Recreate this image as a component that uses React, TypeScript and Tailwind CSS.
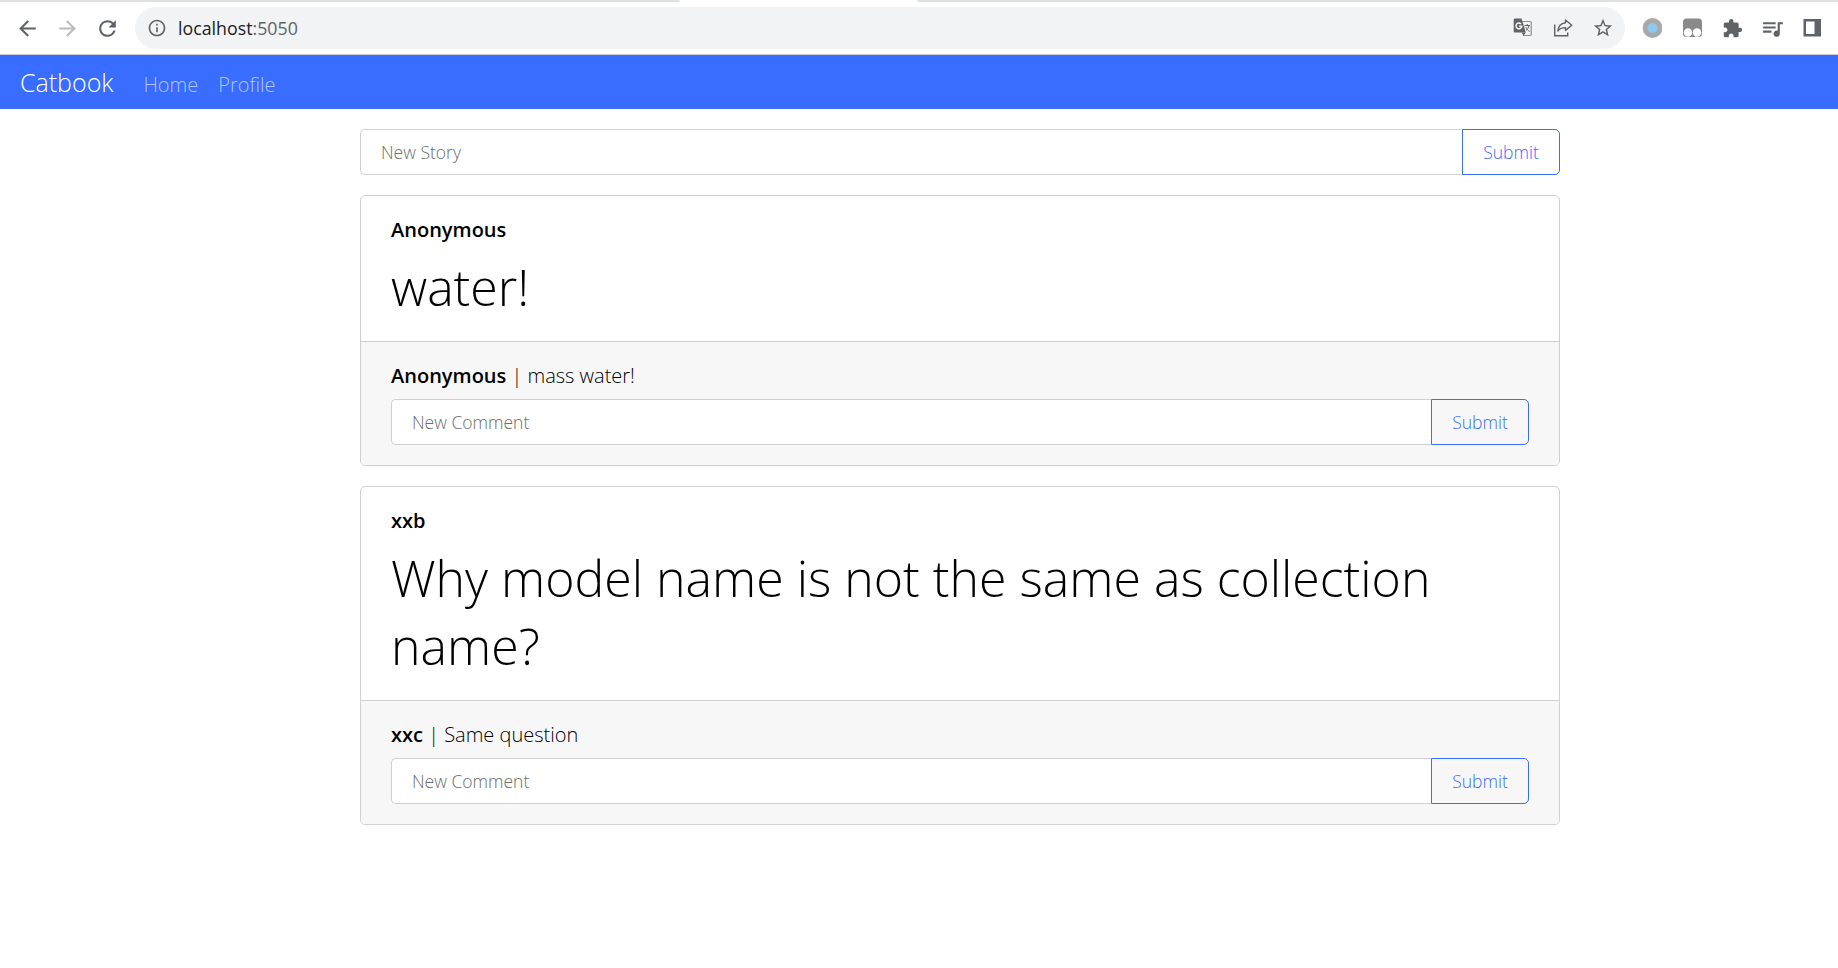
import React from "react";
import { MdArrowBack, MdArrowForward, MdRefresh, MdInfoOutline, MdStarBorder, MdExtension, MdQueueMusic } from "react-icons/md";

function TranslateIcon() {
  return (
    <svg className="size-5" viewBox="0 0 20 20">
      <path d="M9 3.500h8.200a1 1 0 0 1 1 1v12a1 1 0 0 1-1 1H10" fill="none" stroke="#8b8e92" strokeWidth="1.200" />
      <path d="M2 .5h6.500l4.300 14H2a1.300 1.300 0 0 1-1.300-1.300V1.800A1.300 1.300 0 0 1 2 .5z" fill="#5f6368" />
      <path d="M8.500 14.500H12.800L10.500 17.800z" fill="#5f6368" />
      <path d="M8 5.900a2.900 2.900 0 1 0 .8 2.200H6" fill="none" stroke="#fff" strokeWidth="1.400" />
      <path d="M11.500 7.500h5.500M14.300 6v1.500M16 7.500c-.5 2.500-1.800 4-3 5M12.800 9c1 2 2 3.500 4 4.500" fill="none" stroke="#5f6368" strokeWidth="1" />
    </svg>
  );
}

function ShareIcon() {
  return (
    <svg className="size-5" viewBox="0 0 20 20" fill="none" stroke="#5f6368" strokeWidth="1.400">
      <path d="M1.700 6.500V17.800H14.700V14.500" />
      <path d="M12.500 2l6.300 5.200-6.300 5.200V9.600c-3.500 0-6 1-7.700 3.400.4-4 3-7.500 7.700-8.200z" strokeLinejoin="round" />
    </svg>
  );
}

function BrowserBar() {
  return (
    <div className="h-[55px] shrink-0 border-b border-[#c9cbd3] bg-white">
      <div className="flex h-[2px]">
        <div className="w-[680px] rounded-br-[2px] bg-[#dee1e6]" />
        <div className="w-[237px]" />
        <div className="flex-1 rounded-bl-[2px] bg-[#dee1e6]" />
      </div>
      <div className="flex h-[52px] items-center text-[#5f6368]">
        <MdArrowBack className="ml-[15px] size-[25px]" />
        <MdArrowForward className="ml-[15px] size-[25px] text-[#babcbe]" />
        <MdRefresh className="ml-[15px] size-[25px]" />
        <div className="ml-[15px] flex h-[42px] w-[1490px] items-center rounded-full bg-[#f1f3f4] pl-[12px]">
          <MdInfoOutline className="size-5" />
          <span className="ml-[11px] text-[17.800px] text-[#5f6368]">
            <span className="text-[#202124]">localhost</span>:5050
          </span>
          <div className="ml-auto flex items-center gap-5 pr-[12px]">
            <TranslateIcon />
            <ShareIcon />
            <MdStarBorder className="-mx-px size-[22px]" />
          </div>
        </div>
        <div className="ml-[17px] flex items-center gap-5">
          <svg className="size-5" viewBox="0 0 20 20">
            <circle cx="10.500" cy="10" r="9.900" fill="#a9a9a9" />
            <circle cx="10.500" cy="10" r="5" fill="#91c8ef" />
          </svg>
          <svg className="size-5" viewBox="0 0 20 20">
            <rect x="1" y="0.500" width="19" height="18.500" rx="3.500" fill="#8a8a8a" />
            <circle cx="6" cy="14.500" r="4.200" fill="#fff" />
            <circle cx="15" cy="14.500" r="4.200" fill="#fff" />
          </svg>
          <MdExtension className="size-[21px] -mr-px" />
          <MdQueueMusic className="size-[25px] -mx-[2.500px]" />
          <svg className="size-5" viewBox="0 0 20 20">
            <path d="M1.500 1h17.500v17.500H1.500zM4 3.500v12.500H12.500v-12.500z" fill="#5f6368" fillRule="evenodd" />
          </svg>
        </div>
      </div>
    </div>
  );
}

function EntryInput({ placeholder }: { placeholder: string }) {
  return (
    <form className="flex h-[46px]" onSubmit={(e) => e.preventDefault()}>
      <input
        className="min-w-0 flex-1 rounded-l-[5px] border border-r-0 border-[#d0d0d0] bg-white px-5 text-[17.500px] font-light placeholder:text-[#6c6c6c] placeholder:opacity-100"
        placeholder={placeholder}
      />
      <button className="w-[98px] rounded-r-[5px] border border-[#396dff] text-[17.500px] font-light text-[#396dff]">Submit</button>
    </form>
  );
}

type Comment = { author: string; content: string };

function Card({ author, content, comments }: { author: string; content: string; comments: Comment[] }) {
  return (
    <article className="mt-5 overflow-hidden rounded-[5px] border border-[#d0d0d0]">
      <div className="px-[30px] py-5">
        <div className="text-[20px] leading-[27px] font-semibold">{author}</div>
        <p className="mt-[10px] text-[50px] leading-[68px] font-light">{content}</p>
      </div>
      <div className="border-t border-[#d0d0d0] bg-[#f7f7f7] px-[30px] py-5">
        {comments.map((c) => (
          <div key={c.content} className="mb-[10px] text-[20px] leading-[27px] font-light">
            <span className="font-semibold">{c.author}</span>
            <span>{" | "}{c.content}</span>
          </div>
        ))}
        <EntryInput placeholder="New Comment" />
      </div>
    </article>
  );
}

export default function App() {
  return (
    <div className="flex h-[968px] flex-col overflow-hidden bg-white font-['Open_Sans',sans-serif] text-black">
      <BrowserBar />
      <nav className="flex h-[54px] shrink-0 items-baseline bg-[#396dff] px-5 pt-[10px] font-light text-white">
        <span className="text-[25px] leading-[34px]">Catbook</span>
        <a className="ml-[30px] text-[20px] leading-[27px] text-white/60">Home</a>
        <a className="ml-5 text-[20px] leading-[27px] text-white/60">Profile</a>
      </nav>
      <main className="ml-[360px] w-[1200px] pt-5">
        <EntryInput placeholder="New Story" />
        <Card author="Anonymous" content="water!" comments={[{ author: "Anonymous", content: "mass water!" }]} />
        <Card
          author="xxb"
          content="Why model name is not the same as collection name?"
          comments={[{ author: "xxc", content: "Same question" }]}
        />
      </main>
    </div>
  );
}
